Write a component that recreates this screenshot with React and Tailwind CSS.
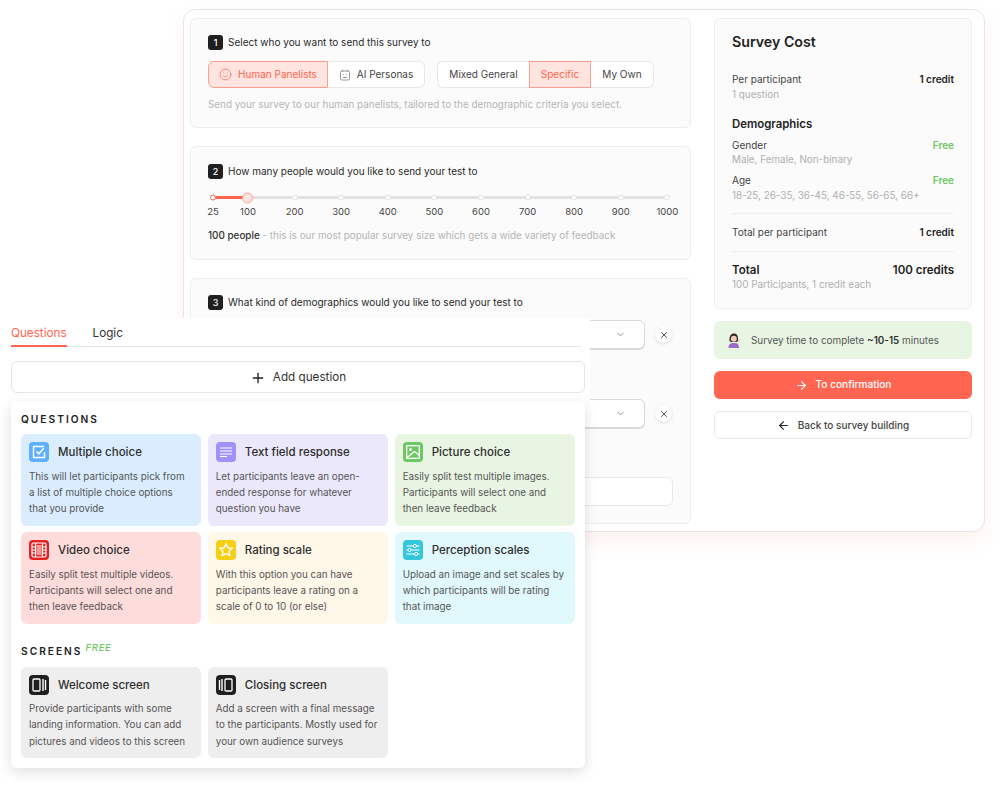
import React from "react";
import { Plus, ArrowRight, ArrowLeft, ChevronDown, X, Smile } from "lucide-react";

const ticks = ["100", "200", "300", "400", "500", "600", "700", "800", "900", "1000"];

const MultipleIcon = () => (
  <svg width="20" height="20" viewBox="0 0 20 20" fill="none">
    <rect width="20" height="20" rx="4" fill="#5eb0ff" />
    <path d="M15 4.500H4.500V15.500H15.500V10" stroke="#fff" strokeWidth="1.400" />
    <path d="M7.500 9.500L9.800 11.800L14.800 6.200" stroke="#fff" strokeWidth="1.500" />
  </svg>
);

const TextIcon = () => (
  <svg width="20" height="20" viewBox="0 0 20 20" fill="none">
    <rect width="20" height="20" rx="4" fill="#a390f8" />
    <path d="M4 6H16M4 9H16M4 12H16M4 14.500H11" stroke="#fff" strokeWidth="1.200" />
  </svg>
);

const PictureIcon = () => (
  <svg width="20" height="20" viewBox="0 0 20 20" fill="none">
    <rect width="20" height="20" rx="4" fill="#6cc860" />
    <rect x="3.700" y="3.700" width="12.600" height="12.600" stroke="#fff" strokeWidth="1.300" />
    <circle cx="7.500" cy="7.500" r="1.500" fill="#fff" />
    <path d="M4 15.500L11.500 9.500L16 13" stroke="#fff" strokeWidth="1.300" />
  </svg>
);

const VideoIcon = () => (
  <svg width="20" height="20" viewBox="0 0 20 20" fill="none">
    <rect width="20" height="20" rx="4" fill="#e5201f" />
    <rect x="3" y="3" width="14" height="14" rx="1.500" stroke="#fff" strokeWidth="1.200" />
    <path d="M6.500 3V17M13.500 3V17M3 7H6.500M3 10H6.500M3 13H6.500M13.500 7H17M13.500 10H17M13.500 13H17" stroke="#fff" strokeWidth="1.200" />
    <rect x="7.500" y="5" width="5" height="10" fill="#fff" opacity="0.55" />
  </svg>
);

const StarIcon = () => (
  <svg width="20" height="20" viewBox="0 0 20 20" fill="none">
    <rect width="20" height="20" rx="4" fill="#f5cf13" />
    <path d="M10 3.800L11.900 7.800L16.300 8.300L13 11.300L13.900 15.700L10 13.500L6.100 15.700L7 11.300L3.700 8.300L8.100 7.800Z" stroke="#fff" strokeWidth="1.400" strokeLinejoin="round" />
  </svg>
);

const ScalesIcon = () => (
  <svg width="20" height="20" viewBox="0 0 20 20" fill="none">
    <rect width="20" height="20" rx="4" fill="#35c6dc" />
    <path d="M3.500 6H16.500M3.500 10H16.500M3.500 14H16.500" stroke="#fff" strokeWidth="1.100" />
    <circle cx="12" cy="6" r="1.600" fill="#35c6dc" stroke="#fff" />
    <circle cx="6.500" cy="10" r="1.600" fill="#35c6dc" stroke="#fff" />
    <circle cx="13" cy="14" r="1.600" fill="#35c6dc" stroke="#fff" />
  </svg>
);

const WelcomeIcon = () => (
  <svg width="20" height="20" viewBox="0 0 20 20" fill="none">
    <rect width="20" height="20" rx="4" fill="#1f1f1f" />
    <rect x="4" y="4" width="7" height="12" rx="1" stroke="#fff" strokeWidth="1.300" />
    <path d="M14 4V16M16.500 5V15" stroke="#fff" strokeWidth="1.400" />
  </svg>
);

const ClosingIcon = () => (
  <svg width="20" height="20" viewBox="0 0 20 20" fill="none">
    <rect width="20" height="20" rx="4" fill="#1f1f1f" />
    <rect x="9" y="4" width="7" height="12" rx="1" stroke="#fff" strokeWidth="1.300" />
    <path d="M6 4V16M3.500 5V15" stroke="#fff" strokeWidth="1.400" />
  </svg>
);

const RobotIcon = () => (
  <svg width="12" height="12" viewBox="0 0 12 12" fill="none" stroke="#8a8a8a" strokeWidth="0.900">
    <rect x="1.500" y="2" width="9" height="9" rx="1.500" />
    <path d="M3.500 0.800V2.500M8.500 0.800V2.500M4 8.500H8" />
    <path d="M4 5.500H4.800M7.200 5.500H8" />
  </svg>
);

const WomanEmoji = () => (
  <svg width="15" height="15" viewBox="0 0 15 15">
    <path d="M1.500 15C1.500 11 3.500 10 7 10C10.500 10 12 11 12 15Z" fill="#9a6bc9" />
    <path d="M2.500 8C2 3 4 0.500 7 0.500C10 0.500 11.500 3 11 8L9.500 9H4Z" fill="#2f2a2a" />
    <circle cx="6.800" cy="5.800" r="3" fill="#f5c9b8" />
    <path d="M11 9L13.500 7" stroke="#f5c9b8" strokeWidth="1.300" />
  </svg>
);

const StepTitle = ({ n, children }) => (
  <div className="flex items-center gap-[5px]">
    <span className="flex h-[15px] w-[15px] items-center justify-center rounded-[3px] bg-[#1f1f1f] text-[9px] font-medium text-white">{n}</span>
    <span className="text-[10px] leading-[15px] text-[#2a2a2a]">{children}</span>
  </div>
);

const Row = ({ label, sub, value, valueClass = "text-[#222222]" }) => (
  <div>
    <div className="flex justify-between text-[10px] leading-[14px]">
      <span className="text-[#444444]">{label}</span>
      <span className={`font-semibold ${valueClass}`}>{value}</span>
    </div>
    <div className="mt-[0.500px] text-[9.900px] leading-[14px] text-[#b0b0b0]">{sub}</div>
  </div>
);

const Tile = ({ bg, icon, title, text }) => (
  <div className={`h-[91.500px] rounded-[6px] px-[8px] pt-[8px] ${bg}`}>
    <div className="flex items-center gap-[9px]">
      {icon}
      <span className="text-[11.500px] font-medium leading-[20px] text-[#2d2d2d]">{title}</span>
    </div>
    <p className="mt-[6.500px] whitespace-pre-line text-[9.800px] leading-[16.400px] text-[#555555]">{text}</p>
  </div>
);

const SelectRow = () => (
  <div className="flex items-center gap-[10px]">
    <div className="flex h-[29px] w-[437px] items-center justify-end rounded-[6px] border border-[#d9d9d9] bg-white pr-[18px] shadow-[0_1px_0_#d9d9d9]">
      <ChevronDown size={11} color="#888888" />
    </div>
    <span className="flex h-[17px] w-[17px] items-center justify-center rounded-full bg-white shadow-[0_1px_3px_rgba(0,0,0,0.12)]">
      <X size={10} color="#333333" />
    </span>
  </div>
);

export default function App() {
  return (
    <div className="relative h-[788px] w-[1000px] overflow-hidden bg-white pl-[183px] pt-[9px] font-['Inter',sans-serif]">
      {/* back window */}
      <div className="flex h-[523px] w-[802px] gap-[23px] rounded-[12px] border border-[#e6e6e6] bg-white pl-[6px] pt-[8px] shadow-[0_8px_20px_rgba(255,101,80,0.09)]">
        <div className="flex w-[501px] flex-col gap-[18px]">
          <section className="h-[110px] rounded-[6px] border border-[#eeeeee] bg-[#fbfbfb] px-[17px] pt-[16px]">
            <StepTitle n="1">Select who you want to send this survey to</StepTitle>
            <div className="mt-[11px] flex text-[10px] font-normal">
              <div className="flex h-[27px] w-[120px] items-center justify-center gap-[6px] rounded-l-[6px] border border-[#ff9e90] bg-[#ffe4e0] text-[#ff6550]">
                <Smile size={13} strokeWidth={1.400} />
                Human Panelists
              </div>
              <div className="flex h-[27px] w-[97px] items-center justify-center gap-[6px] rounded-r-[6px] border border-l-0 border-[#e8e8e8] bg-white text-[#444444]">
                <RobotIcon />
                AI Personas
              </div>
              <div className="ml-[12px] flex h-[27px] w-[92px] items-center justify-center rounded-l-[6px] border border-r-0 border-[#e8e8e8] bg-white text-[#444444]">Mixed General</div>
              <div className="flex h-[27px] w-[62px] items-center justify-center border border-[#ff9e90] bg-[#ffe4e0] text-[#ff6550]">Specific</div>
              <div className="flex h-[27px] w-[63px] items-center justify-center rounded-r-[6px] border border-l-0 border-[#e8e8e8] bg-white text-[#444444]">My Own</div>
            </div>
            <p className="mt-[9px] text-[9.900px] leading-[14px] text-[#b5b5b5]">Send your survey to our human panelists, tailored to the demographic criteria you select.</p>
          </section>

          <section className="h-[114px] rounded-[6px] border border-[#eeeeee] bg-[#fbfbfb] px-[17px] pt-[17px]">
            <StepTitle n="2">How many people would you like to send your test to</StepTitle>
            <div className="relative mt-[13px] flex text-[9.500px] leading-[12px] text-[#444444]">
              <div className="absolute left-[5px] top-[4px] h-[3px] w-[455px] bg-[#e2e2e2]" />
              <div className="absolute left-[5px] top-[4px] h-[3px] w-[35px] bg-[#ff6550]" />
              <div className="relative mr-[6.700px] flex w-[10px] shrink-0 flex-col items-center">
                <span className="h-[6px] w-[6px] translate-y-[2.500px] rounded-full border-[1.500px] border-[#ff6550] bg-white" />
                <span className="mt-[7.500px]">25</span>
              </div>
              {ticks.map((t, i) => (
                <div key={t} className="relative flex w-[46.600px] shrink-0 flex-col items-center">
                  {i === 0 ? (
                    <span className="-mt-[2px] -mb-[3px] h-[11px] w-[11px] translate-y-[2.500px] rounded-full border border-[#ff9e90] bg-[#ffe4e0]" />
                  ) : (
                    <span className="h-[6px] w-[6px] translate-y-[2.500px] rounded-full border border-[#e2e2e2] bg-white" />
                  )}
                  <span className="mt-[7.500px] whitespace-nowrap">{t}</span>
                </div>
              ))}
            </div>
            <p className="mt-[10px] text-[9.900px] leading-[14px] text-[#b5b5b5]">
              <span className="font-medium text-[#333333]">100 people</span> - this is our most popular survey size which gets a wide variety of feedback
            </p>
          </section>

          <section className="h-[246px] rounded-[6px] border border-[#eeeeee] bg-[#fbfbfb] px-[17px] pt-[16px]">
            <StepTitle n="3">What kind of demographics would you like to send your test to</StepTitle>
            <div className="mt-[10px]"><SelectRow /></div>
            <div className="mt-[50px]"><SelectRow /></div>
            <div className="mt-[49px] h-[29px] w-[465px] rounded-[6px] border border-[#e8e8e8] bg-white" />
          </section>
        </div>

        <aside className="flex w-[258px] flex-col">
          <div className="h-[291px] rounded-[6px] border border-[#eeeeee] bg-[#fbfbfb] px-[17px] pt-[13px]">
            <h2 className="text-[14.200px] font-semibold leading-[20px] text-[#222222]">Survey Cost</h2>
            <div className="mt-[20px]"><Row label="Per participant" sub="1 question" value="1 credit" /></div>
            <h3 className="mt-[15px] text-[11.400px] font-semibold leading-[16px] text-[#222222]">Demographics</h3>
            <div className="mt-[6px]"><Row label="Gender" sub="Male, Female, Non-binary" value="Free" valueClass="text-[#6cc860]" /></div>
            <div className="mt-[7px]"><Row label="Age" sub="18-25, 26-35, 36-45, 46-55, 56-65, 66+" value="Free" valueClass="text-[#6cc860]" /></div>
            <div className="mt-[11px] flex justify-between border-y border-[#eeeeee] py-[11px] text-[10px] leading-[15px]">
              <span className="text-[#444444]">Total per participant</span>
              <span className="font-semibold text-[#222222]">1 credit</span>
            </div>
            <div className="mt-[11px] flex justify-between text-[11.500px] font-semibold leading-[15px] text-[#222222]">
              <span>Total</span>
              <span>100 credits</span>
            </div>
            <div className="text-[9.900px] leading-[13px] text-[#b0b0b0]">100 Participants, 1 credit each</div>
          </div>
          <div className="mt-[12px] flex h-[38px] items-center gap-[9px] rounded-[6px] bg-[#e8f5e3] pl-[13px] text-[9.900px] text-[#555555]">
            <WomanEmoji />
            <span>Survey time to complete <b className="font-semibold text-[#333333]">~10-15</b> minutes</span>
          </div>
          <button className="mt-[12px] flex h-[28px] items-center justify-center gap-[8px] rounded-[6px] bg-[#ff6550] text-[10.100px] font-medium text-white">
            <ArrowRight size={13} />
            To confirmation
          </button>
          <button className="mt-[12px] flex h-[28px] items-center justify-center gap-[8px] rounded-[6px] border border-[#eaeaea] bg-white text-[10px] font-medium text-[#444444]">
            <ArrowLeft size={13} color="#222222" />
            Back to survey building
          </button>
        </aside>
      </div>

      {/* floating question panel */}
      <div className="absolute left-0 top-[318px] w-[592px] px-[11px]">
        <div className="absolute left-0 top-0 h-[84px] w-[590px] bg-white" />
        <div className="relative">
          <div className="flex h-[29px] items-start gap-[26px] border-b border-[#e4e4e4] pt-[7px] text-[11.700px] leading-[17px]">
            <span className="h-[22px] border-b-[2px] border-[#ff6550] text-[#ff6550]">Questions</span>
            <span className="text-[#333333]">Logic</span>
          </div>
          <div className="mt-[14px] flex h-[32px] w-[574px] items-center justify-center gap-[7px] rounded-[6px] border border-[#e4e4e4] bg-white pt-[1px] text-[11.700px] text-[#333333]">
            <Plus size={16} color="#222222" />
            Add question
          </div>
          <div className="mt-[8px] h-[367px] w-[574px] rounded-[6px] bg-white px-[10px] pt-[11px] shadow-[0_4px_14px_rgba(0,0,0,0.13)]">
            <h4 className="text-[10.200px] font-semibold leading-[14px] tracking-[2px] text-[#222222]">QUESTIONS</h4>
            <div className="mt-[8px] grid w-[554px] grid-cols-3 gap-x-[6.500px] gap-y-[6.500px]">
              <Tile bg="bg-[#d9edff]" icon={<MultipleIcon />} title="Multiple choice" text={"This will let participants pick from\na list of multiple choice options\nthat you provide"} />
              <Tile bg="bg-[#ece8fc]" icon={<TextIcon />} title="Text field response" text={"Let participants leave an open-\nended response for whatever\nquestion you have"} />
              <Tile bg="bg-[#e8f5e3]" icon={<PictureIcon />} title="Picture choice" text={"Easily split test multiple images.\nParticipants will select one and\nthen leave feedback"} />
              <Tile bg="bg-[#ffdcdc]" icon={<VideoIcon />} title="Video choice" text={"Easily split test multiple videos.\nParticipants will select one and\nthen leave feedback"} />
              <Tile bg="bg-[#fff7e8]" icon={<StarIcon />} title="Rating scale" text={"With this option you can have\nparticipants leave a rating on a\nscale of 0 to 10 (or else)"} />
              <Tile bg="bg-[#e1f9fd]" icon={<ScalesIcon />} title="Perception scales" text={"Upload an image and set scales by\nwhich participants will be rating\nthat image"} />
            </div>
            <div className="mt-[18px] flex items-start">
              <h4 className="mt-[2px] text-[10.200px] font-semibold leading-[14px] tracking-[2px] text-[#222222]">SCREENS</h4>
              <span className="ml-[3px] mt-0 text-[9.500px] font-medium italic leading-[12px] tracking-[0.700px] text-[#6cc860]">FREE</span>
            </div>
            <div className="mt-[9px] grid w-[554px] grid-cols-3 gap-x-[6.500px]">
              <Tile bg="bg-[#eeeeee]" icon={<WelcomeIcon />} title="Welcome screen" text={"Provide participants with some\nlanding information. You can add\npictures and videos to this screen"} />
              <Tile bg="bg-[#eeeeee]" icon={<ClosingIcon />} title="Closing screen" text={"Add a screen with a final message\nto the participants. Mostly used for\nyour own audience surveys"} />
            </div>
          </div>
        </div>
      </div>
    </div>
  );
}
